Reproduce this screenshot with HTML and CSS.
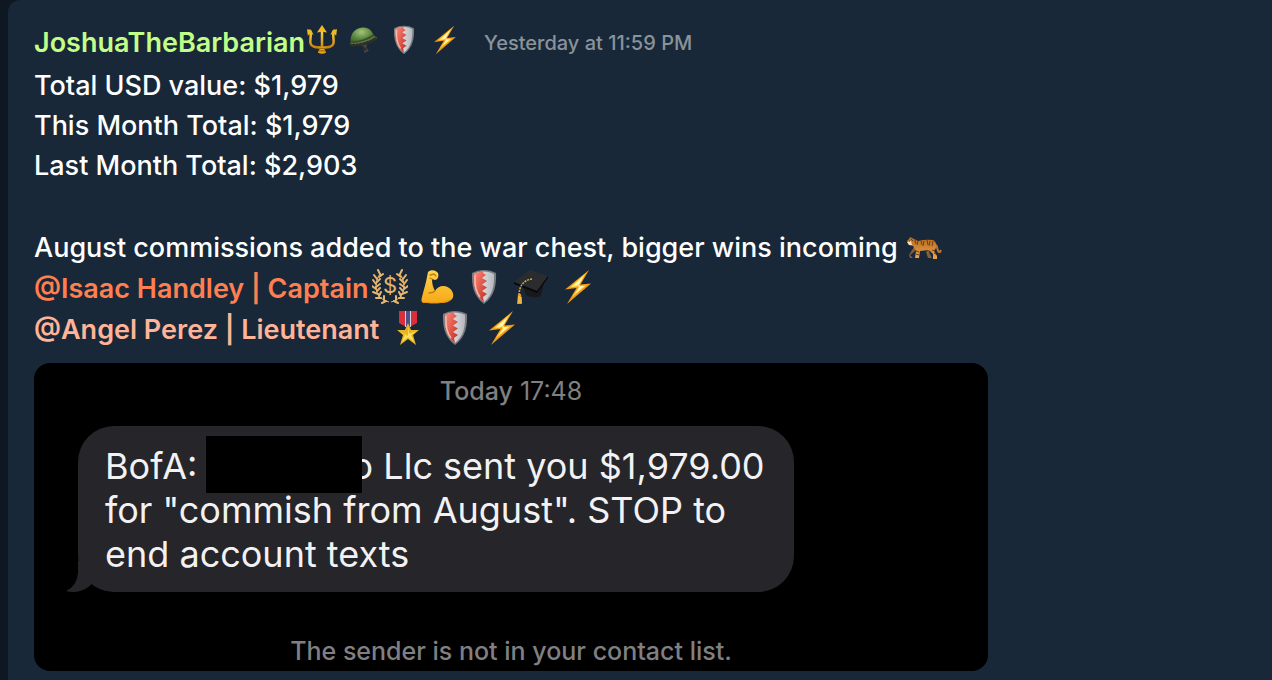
FILE: index.html
```html
<!DOCTYPE html>
<html lang="en">
<head>
    <meta charset="UTF-8">
    <title>War Chest Chat</title>
    <meta name="viewport" content="width=device-width, initial-scale=1">
    <link rel="stylesheet" href="styles.css">
</head>
<body>
    <!-- shared badge icons -->
    <svg class="sprite" aria-hidden="true">
        <defs>
            <linearGradient id="gold" x1="0" y1="0" x2="0" y2="1">
                <stop offset="0" stop-color="#ffd64a"/>
                <stop offset="1" stop-color="#c98008"/>
            </linearGradient>
            <linearGradient id="steel" x1="0" y1="0" x2="1" y2="0">
                <stop offset="0" stop-color="#f4f4f5"/>
                <stop offset="1" stop-color="#b4b7bd"/>
            </linearGradient>
            <linearGradient id="red" x1="0" y1="0" x2="1" y2="1">
                <stop offset="0" stop-color="#ff8a7a"/>
                <stop offset="1" stop-color="#c02a20"/>
            </linearGradient>
            <radialGradient id="green" cx=".42" cy=".25" r=".8">
                <stop offset="0" stop-color="#a5c47a"/>
                <stop offset=".45" stop-color="#5b8740"/>
                <stop offset="1" stop-color="#2d4a24"/>
            </radialGradient>
            <linearGradient id="skin" x1="0" y1="0" x2="0" y2="1">
                <stop offset="0" stop-color="#ffd64f"/>
                <stop offset="1" stop-color="#f6a817"/>
            </linearGradient>
            <linearGradient id="fur" x1="0" y1="0" x2="0" y2="1">
                <stop offset="0" stop-color="#b8681c"/>
                <stop offset="1" stop-color="#eba552"/>
            </linearGradient>
        </defs>
        <symbol id="shield" viewBox="0 0 36 36">
            <path d="M18 1C14 1 9.500 2 6 4C5.500 15 7 27 18 35C29 27 30.500 15 30 4C26.500 2 22 1 18 1Z" fill="#777b82"/>
            <path d="M18 2.500C14 2.500 10.500 3.500 8 5C7.500 15 9 26 18 33C27 26 28.500 15 28 5C25.500 3.500 22 2.500 18 2.500Z" fill="url(#steel)"/>
            <path d="M18 2.500C14 2.500 10.500 3.500 8 5C7.500 15 9 26 18 33L17 28L21 25L16 22L21 18.500L16 15.500L21 12L16 9L20 6L17 4Z" fill="url(#red)"/>
            <path d="M9 6C8.500 15 10 23 14 28" fill="none" stroke="#ffb5a8" stroke-width="1.500"/>
        </symbol>
        <symbol id="bolt" viewBox="0 0 36 36">
            <path d="M29 1L5 20.500L16.500 19L7 35L31 14.500L20.500 15.500Z" fill="#f59c13"/>
            <path d="M26 4L10 18.500L20 17L12 28L26 16.500L17 17Z" fill="#ffe458"/>
            <path d="M24 7L13 17L20 16L16 24L24 17L18 17.500Z" fill="#fff7ba"/>
        </symbol>
        <symbol id="trident" viewBox="0 0 36 36">
            <g fill="none" stroke="url(#gold)" stroke-width="3" stroke-linecap="round" stroke-linejoin="round">
                <path d="M3.500 7C7 13 0 23 8 26C11 27.500 25 27.500 28 26C36 23 29 13 32.500 7"/>
                <path d="M17.500 7H18.500V29H17.500Z" stroke-width="2"/>
            </g>
            <path d="M18 0L24 9L18 8L12 9ZM0 5L5 6L8 12L4 10L1 13ZM36 5L31 6L28 12L32 10L35 13Z" fill="#f2b91f"/>
            <path d="M13 26H23L21 29L23 33Q18 36 13 33L15 29Z" fill="#e3a417"/>
            <path d="M14 31H22M14 28H22" stroke="#8f5907"/>
        </symbol>
        <symbol id="helmet" viewBox="0 0 36 36">
            <path d="M15 25L19 29L20 34L25 31L22 27L23 23Z" fill="#4a4447"/>
            <path d="M16 25L22 30" stroke="#26282a" stroke-width="2"/>
            <path d="M3 20C3 9 9 4 17 3C25 2 29 7 31 13L35 15C35 17 31 19 27 20C19 24 10 26 3 25Q2 23 3 20Z" fill="url(#green)"/>
            <path d="M3 24C13 25 26 21 34 16" fill="none" stroke="#2f3027" stroke-width="3"/>
            <path d="M4 20C12 21 24 17 31 12" fill="none" stroke="#3b4d2a" stroke-width="2"/>
            <path d="M4 22C12 23 25 19 32 14" fill="none" stroke="#857b62" stroke-dasharray="2 2"/>
        </symbol>
        <symbol id="arm" viewBox="0 0 36 36">
            <path d="M9 3C12 0 17 1 19 4C20 7 19 11 16 11L13 10C13 15 14 18 16 22C20 15 29 16 33 22C37 29 31 34 23 34H6C2 34 2 31 3 28C5 20 7 14 8 8Z" fill="url(#skin)"/>
            <path d="M11 6L15 5L17 7M13 10L11 9M16 22C14 24 12 24 10 24" fill="none" stroke="#c67a14" stroke-width="1.300" stroke-linecap="round"/>
            <path d="M4 33Q20 36 31 31" fill="none" stroke="#df8d16" stroke-width="1"/>
        </symbol>
        <symbol id="cap" viewBox="0 0 36 36">
            <path d="M9 14L13 26Q20 30 28 27L31 13L20 20Z" fill="#17191b"/>
            <path d="M17 1L35 7L24 22L1 13Z" fill="#2a2c2e"/>
            <path d="M1 13L24 22L35 7V9L24 24L1 15Z" fill="#08090a"/>
            <path d="M19 10C12 11 6 15 6 27" fill="none" stroke="#eaa52e" stroke-width="1.500" stroke-dasharray="2 1"/>
            <path d="M5 25L8 25L9 35H4Z" fill="#e39b26"/>
            <path d="M6 27V34M8 28V34" stroke="#ffd365"/>
        </symbol>
        <symbol id="medal" viewBox="0 0 36 36">
            <path d="M9 1H27V13L20 17H16L9 13Z" fill="#dc2e3a"/>
            <path d="M15 1H21V17H15Z" fill="#d5d2e0"/>
            <path d="M16 1H20V17H16Z" fill="#4a528c"/>
            <path d="M18 13L21 20H29L23 25L26 35L18 29L10 35L13 25L7 20H15Z" fill="#eab520"/>
            <path d="M18 16V26L9 21L15 25L12 32L18 27L24 32L21 25L27 21L19 24Z" fill="#ffe65c"/>
        </symbol>
        <symbol id="branch" viewBox="0 0 36 36">
            <path d="M8 5C3 11 2 24 9 29Q12 32 17 33" fill="none" stroke="#e6b56e" stroke-width="1"/>
            <path d="M8 5L6 1M5 10L2 6M4 15L1 11M4 20L0 17M6 25L1 23M9 29L4 29M14 32L10 34M7 8L11 5M5 13L8 10M4 18L8 15M5 22L8 19M7 27L9 23M12 31L12 27" fill="none" stroke="#e6b56e" stroke-width="2" stroke-linecap="round"/>
        </symbol>
        <symbol id="tiger" viewBox="0 0 36 24">
            <path d="M29 8C33 11 30 16 34 16L35 14" fill="none" stroke="#b77532" stroke-width="2"/>
            <path d="M10 13L8 16L4 19L7 22H4L3 19L8 11ZM25 12L23 16L26 22H22L20 16Z" fill="#80603e"/>
            <path d="M1 5L3 3L4 1L6 2L8 3L12 5Q20 3 27 4Q31 6 30 12L28 15L31 20V23H27L27 18L23 14L14 15L13 22H9L10 15L7 10L3 9Z" fill="url(#fur)"/>
            <path d="M1 6L5 5L6 9L3 9Z" fill="#f0dfc6"/>
            <path d="M5 3L7 5M9 4L10 8M12 5L11 9M15 5L16 9M18 5L17 10M21 4L22 9M24 5L23 10M27 5L26 10M10 15L13 16M10 18L13 19M26 14L29 15M28 17L30 18M3 5H4" stroke="#6b3f19" stroke-width="1"/>
        </symbol>
    </svg>

    <main class="message">
        <header class="message-header">
            <a class="author" href="#">JoshuaTheBarbarian</a>
            <span class="badges badges-small">
                <svg class="icon"><use href="#trident"/></svg>
                <svg class="icon"><use href="#helmet"/></svg>
                <svg class="icon"><use href="#shield"/></svg>
                <svg class="icon"><use href="#bolt"/></svg>
            </span>
            <time class="time">Yesterday at 11:59 PM</time>
        </header>

        <p class="totals">
            Total USD value: $1,979<br>
            This Month Total: $1,979<br>
            Last Month Total: $2,903
        </p>

        <div class="note">
            <p class="row">
                August commissions added to the war chest, bigger wins incoming
                <svg class="icon tiger"><use href="#tiger"/></svg>
            </p>
            <p class="row">
                <a class="captain" href="#">@Isaac Handley | Captain</a>
                <span class="badges">
                    <svg class="icon" viewBox="0 0 36 36">
                        <use href="#branch" width="36" height="36"/>
                        <use href="#branch" width="36" height="36" transform="translate(36 0) scale(-1 1)"/>
                        <text x="18" y="24" class="coin" text-anchor="middle">$</text>
                    </svg>
                    <svg class="icon"><use href="#arm"/></svg>
                    <svg class="icon"><use href="#shield"/></svg>
                    <svg class="icon"><use href="#cap"/></svg>
                    <svg class="icon"><use href="#bolt"/></svg>
                </span>
            </p>
            <p class="row">
                <a class="lieutenant" href="#">@Angel Perez | Lieutenant</a>
                <span class="badges badges-spaced">
                    <svg class="icon"><use href="#medal"/></svg>
                    <svg class="icon"><use href="#shield"/></svg>
                    <svg class="icon"><use href="#bolt"/></svg>
                </span>
            </p>
        </div>

        <section class="attachment">
            <p class="sms-date"><b>Today</b> 17:48</p>
            <div class="bubble">
                BofA: <span class="redacted"></span>o Llc sent you $1,979.00<br>
                for "commish from August". STOP to<br>
                end account texts
                <svg class="tail" viewBox="0 0 32 32"><path d="M12 0V12Q11 25 0 30Q14 34 26 23L32 12V0Z"/></svg>
            </div>
            <p class="sms-info">The sender is not in your contact list.</p>
        </section>
    </main>
</body>
</html>
```
FILE: styles.css
```css
* {
    box-sizing: border-box;
}
body {
    margin: 0;
    padding-left: 8px;
    background: #0d1822;
    color: #fff;
    font-family: Inter, "Liberation Sans", sans-serif;
    font-size: 27px;
    font-weight: 500;
}
p {
    margin: 0;
}
a {
    text-decoration: none;
}
.sprite {
    position: absolute;
    width: 0;
    height: 0;
}
.message {
    min-height: 100vh;
    padding: 23px 26px 9px;
    background: #182838;
    border-top-left-radius: 12px;
}

/* Author line */
.message-header {
    display: flex;
    flex-wrap: wrap;
    align-items: center;
    line-height: 40px;
    margin-bottom: 3px;
}
.author {
    color: #c1ff87;
    font-weight: 600;
}
.time {
    margin-left: 24px;
    color: #8a939b;
    font-size: 20px;
}

/* Badges */
.icon {
    display: block;
    width: 36px;
    height: 36px;
    flex: none;
}
.badges {
    display: flex;
    gap: 11px;
    margin-left: 3px;
    padding-bottom: 4px;
}
.badges-small {
    margin-left: 2px;
    padding-bottom: 6px;
}
.badges-small .icon {
    width: 30px;
    height: 30px;
}
.badges-spaced {
    margin-left: 11px;
}
.tiger {
    height: 24px;
    margin-left: 8px;
}
.coin {
    fill: #e6b56e;
    font-size: 22px;
    font-weight: 400;
}

/* Message text */
.totals {
    line-height: 40px;
    margin-bottom: 41px;
}
.row {
    display: flex;
    flex-wrap: wrap;
    align-items: center;
    line-height: 41px;
}
.captain {
    color: #ff7f50;
    font-weight: 600;
}
.lieutenant {
    color: #ffb499;
    font-weight: 600;
}

/* Attached text message */
.attachment {
    max-width: 954px;
    margin-top: 13px;
    padding: 12px 44px 4px;
    border-radius: 16px;
    background: #000;
    color: #808082;
    font-size: 25px;
    line-height: 32px;
}
.sms-date, .sms-info {
    text-align: center;
}
.sms-date {
    font-weight: 400;
}
.sms-date b {
    font-weight: 500;
}
.bubble {
    position: relative;
    width: fit-content;
    margin: 19px 0 43px;
    padding: 18px 29px 16px 27px;
    border-radius: 36px;
    background: #262529;
    color: #f2f2f4;
    font-size: 36px;
    font-weight: 400;
    line-height: 44px;
}
.redacted {
    display: inline-block;
    position: relative;
    width: 144px;
}
.redacted::after {
    content: "";
    position: absolute;
    left: -2px;
    bottom: -14px;
    width: 156px;
    height: 57px;
    background: #000;
}
.tail {
    position: absolute;
    left: -12px;
    bottom: -1px;
    width: 32px;
    height: 32px;
    fill: #262529;
}

@media (max-width: 700px) {
    body {
        font-size: 20px;
    }
    .attachment {
        padding: 12px 20px;
    }
    .bubble {
        font-size: 22px;
        line-height: 28px;
    }
}
```
